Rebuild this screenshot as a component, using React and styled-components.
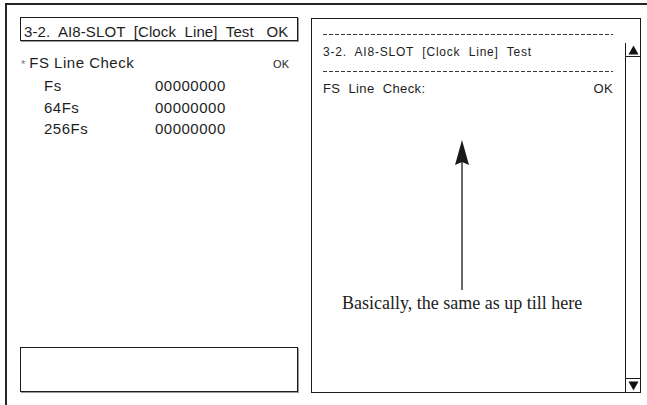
import React from "react";
import styled, { createGlobalStyle } from "styled-components";

const Global = createGlobalStyle`
  html, body { margin: 0; padding: 0; background: #fff; }
  body { font-family: "Liberation Sans", Arial, sans-serif; color: #1e1e1e; }
  #root { width: 647px; height: 405px; overflow: hidden; }
`;

const Frame = styled.div`
  box-sizing: border-box;
  margin: 3px 0 0 5px;
  height: 402px;
  border-top: 2px solid #262626;
  border-left: 2px solid #262626;
  padding: 12px 0 0 13px;
  display: flex;
  align-items: flex-start;
`;

const LeftColumn = styled.div`
  box-sizing: border-box;
  width: 278px;
  height: 375px;
  display: flex;
  flex-direction: column;
`;

const TitleBox = styled.div`
  box-sizing: border-box;
  height: 24px;
  border: 1px solid #1a1a1a;
  box-shadow: 1px 1px 0 #9a9a9a;
  padding: 5px 3px 0;
  font-size: 15px;
  letter-spacing: 0.1px;
  line-height: 17px;
  white-space: pre;
`;

const CheckRow = styled.div`
  margin-top: 14px;
  padding: 0 9px 0 1px;
  display: flex;
  align-items: baseline;
  justify-content: space-between;
  line-height: 16px;
`;

const CheckLabel = styled.span`
  font-size: 15px;
  letter-spacing: 0.5px;
`;

const Star = styled.span`
  font-size: 11px;
  color: #777;
  margin-right: 4px;
  letter-spacing: 0;
`;

const SmallOk = styled.span`
  font-size: 11px;
`;

const ValueGrid = styled.div`
  margin-top: 3px;
  padding-left: 24px;
  display: grid;
  grid-template-columns: 111px auto;
  font-size: 15px;
  letter-spacing: 0.5px;
  line-height: 21.5px;
`;

const BottomBox = styled.div`
  box-sizing: border-box;
  margin-top: auto;
  height: 45px;
  border: 1px solid #1a1a1a;
  box-shadow: 1px 1px 0 #9a9a9a;
`;

const Panel = styled.div`
  box-sizing: border-box;
  margin: 1px 0 0 13px;
  width: 330px;
  height: 375px;
  border: 1px solid #1a1a1a;
  display: flex;
`;

const Main = styled.div`
  flex: 1;
  padding: 15px 12px 0 11px;
  display: flex;
  flex-direction: column;
`;

const Dash = styled.div`
  height: 1px;
  margin-top: ${(p) => p.$top || 0}px;
  background: repeating-linear-gradient(to right, #3a3a3a 0 4px, transparent 4px 6px);
`;

const PanelTitle = styled.div`
  margin-top: 10px;
  font-size: 12px;
  letter-spacing: 0.8px;
  line-height: 14px;
  white-space: pre;
`;

const PanelRow = styled.div`
  margin-top: 9px;
  display: flex;
  justify-content: space-between;
  font-size: 13px;
  letter-spacing: 0.4px;
  line-height: 15px;
  white-space: pre;
`;

const Note = styled.div`
  margin: 44px 0 0 19px;
  align-self: flex-start;
  display: flex;
  flex-direction: column;
  align-items: center;
`;

const Caption = styled.div`
  margin-top: 3px;
  font-family: "Liberation Serif", "Times New Roman", serif;
  font-size: 18px;
  line-height: 21px;
  color: #222;
  white-space: nowrap;
`;

const ScrollBar = styled.div`
  box-sizing: border-box;
  width: 15px;
  margin-top: 24px;
  border-left: 1px solid #1a1a1a;
  display: flex;
  flex-direction: column;
  justify-content: space-between;
`;

const ScrollButton = styled.div`
  box-sizing: border-box;
  height: 14px;
  display: flex;
  align-items: center;
  justify-content: center;
  border-${(p) => (p.$down ? "top" : "bottom")}: 1px solid #1a1a1a;
`;

const Arrow = () => (
  <svg width="16" height="150" viewBox="0 0 16 150">
    <polygon points="8,0 15,25 8,22 1,25" fill="#1a1a1a" />
    <line x1="8" y1="20" x2="8" y2="150" stroke="#1a1a1a" strokeWidth="1.3" />
  </svg>
);

const Tri = ({ down }) => (
  <svg width="11" height="10" viewBox="0 0 11 10">
    <polygon points={down ? "0.5,0.5 10.5,0.5 5.5,9.5" : "5.5,0.5 10.5,9.5 0.5,9.5"} fill="#111" />
  </svg>
);

export default function App() {
  return (
    <>
      <Global />
      <Frame>
        <LeftColumn>
          <TitleBox>{"3-2.  AI8-SLOT  [Clock  Line]  Test   OK"}</TitleBox>
          <CheckRow>
            <CheckLabel>
              <Star>*</Star>FS Line Check
            </CheckLabel>
            <SmallOk>OK</SmallOk>
          </CheckRow>
          <ValueGrid>
            <span>Fs</span>
            <span>00000000</span>
            <span>64Fs</span>
            <span>00000000</span>
            <span>256Fs</span>
            <span>00000000</span>
          </ValueGrid>
          <BottomBox />
        </LeftColumn>
        <Panel>
          <Main>
            <Dash />
            <PanelTitle>{"3-2.  AI8-SLOT  [Clock  Line]  Test"}</PanelTitle>
            <Dash $top={12} />
            <PanelRow>
              <span>{"FS  Line  Check:"}</span>
              <span>OK</span>
            </PanelRow>
            <Note>
              <Arrow />
              <Caption>Basically, the same as up till here</Caption>
            </Note>
          </Main>
          <ScrollBar>
            <ScrollButton>
              <Tri />
            </ScrollButton>
            <ScrollButton $down>
              <Tri down />
            </ScrollButton>
          </ScrollBar>
        </Panel>
      </Frame>
    </>
  );
}
